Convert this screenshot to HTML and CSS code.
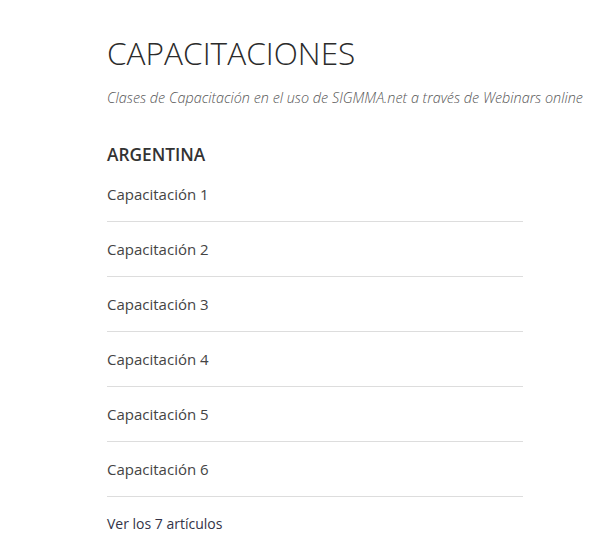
FILE: index.html
```html
<!DOCTYPE html>
<html lang="es">
<head>
    <meta charset="UTF-8">
    <meta name="viewport" content="width=device-width, initial-scale=1.0">
    <title>Capacitaciones</title>
    <link rel="stylesheet" href="styles.css">
</head>
<body>
    <div id="page">
        <h1>CAPACITACIONES</h1>
        <p class="subtitle">Clases de Capacitación en el uso de SIGMMA.net a través de Webinars online</p>

        <section class="section">
            <h2>ARGENTINA</h2>
            <ul class="article-list">
                <li><a href="#">Capacitación 1</a></li>
                <li><a href="#">Capacitación 2</a></li>
                <li><a href="#">Capacitación 3</a></li>
                <li><a href="#">Capacitación 4</a></li>
                <li><a href="#">Capacitación 5</a></li>
                <li><a href="#">Capacitación 6</a></li>
            </ul>
            <a class="see-all" href="#">Ver los 7 artículos</a>
        </section>
    </div>
</body>
</html>
```

FILE: styles.css
```css
body {
    font-family: 'Open Sans', 'Noto Sans', Arial, sans-serif;
    margin: 0;
    padding: 0;
    background-color: #fff;
    color: #333;
}
#page {
    width: 416px;
    margin-left: 107px;
    padding-top: 30px;
}
h1 {
    font-size: 31.6px;
    font-weight: 300;
    line-height: 46px;
    margin: 0;
    color: #2b2b2b;
}
.subtitle {
    font-size: 14.4px;
    font-style: italic;
    font-weight: 300;
    line-height: 20px;
    color: #555;
    margin: 12px 0 0;
    white-space: nowrap;
}
.section h2 {
    font-size: 17.3px;
    font-weight: 600;
    color: #333;
    margin: 35px 0 0;
    line-height: 24px;
}
.article-list {
    list-style: none;
    margin: 0;
    padding: 0;
}
.article-list li {
    border-bottom: 1px solid #ddd;
    padding: 17px 0 16px;
    line-height: 21px;
}
.article-list a {
    font-size: 15px;
    color: #444;
    text-decoration: none;
}
.see-all {
    display: block;
    margin-top: 16px;
    font-size: 14px;
    line-height: 21px;
    color: #333347;
    text-decoration: none;
}
```
